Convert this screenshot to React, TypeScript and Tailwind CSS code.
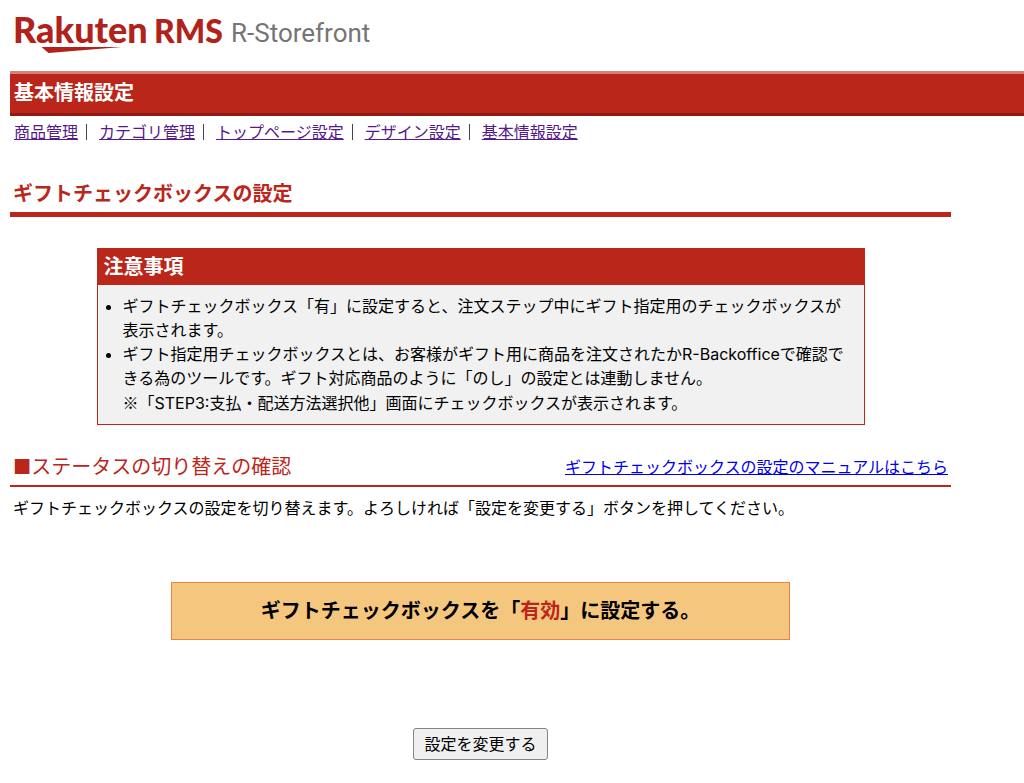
interface NavItem {
  label: string;
  href: string;
}

const NAV: NavItem[] = [
  { label: "商品管理", href: "#items" },
  { label: "カテゴリ管理", href: "#categories" },
  { label: "トップページ設定", href: "#top-page" },
  { label: "デザイン設定", href: "#design" },
  { label: "基本情報設定", href: "#basic" },
];

function Logo() {
  return (
    <svg className="block" width="380" height="60" viewBox="0 0 380 60" role="img" aria-label="Rakuten RMS R-Storefront">
      <g fill="#b1221a" fontFamily="Lato, 'Liberation Sans', sans-serif" fontWeight="900">
        <text x="3" y="43" fontSize="36">Rakuten</text>
        <text x="144" y="43" fontSize="32">RMS</text>
      </g>
      <path d="M31.5 47H112L38.5 53Z" fill="#b1221a" />
      <text x="221" y="42" fontSize="26" fill="#757575" fontFamily="Roboto, 'Liberation Sans', sans-serif">
        R-Storefront
      </text>
    </svg>
  );
}

function Nav() {
  return (
    <nav className="flex flex-wrap px-1 py-1">
      {NAV.map((item, i) => (
        <div key={item.href} className="flex items-center">
          <a href={item.href} className="text-[#551a8b] underline">
            {item.label}
          </a>
          {i < NAV.length - 1 && <span className="w-px h-4 bg-[#444] ml-2 mr-3" />}
        </div>
      ))}
    </nav>
  );
}

function Notice() {
  return (
    <section className="w-full max-w-[768px] mx-auto border border-[#bb261a] bg-[#f1f1f1]">
      <h3 className="bg-[#bb261a] text-white text-xl leading-9 font-bold px-[6px]">注意事項</h3>
      <ul className="list-disc pl-[25px] pr-2 py-[9px]">
        <li>
          ギフトチェックボックス「有」に設定すると、注文ステップ中にギフト指定用のチェックボックスが表示されます。
        </li>
        <li>
          ギフト指定用チェックボックスとは、お客様がギフト用に商品を注文されたかR-Backofficeで確認できる為のツールです。ギフト対応商品のように「のし」の設定とは連動しません。
          <br />
          <span className="font-['Noto_Sans_CJK_JP',sans-serif]">※</span>
          「STEP3:支払・配送方法選択他」画面にチェックボックスが表示されます。
        </li>
      </ul>
    </section>
  );
}

export default function App() {
  return (
    <div lang="ja" className="bg-white text-black text-base leading-6 pl-[10px] pb-6 font-[Inter,'Noto_Sans_CJK_JP',sans-serif]">
      <header>
        <Logo />
        <h1 className="mt-[11px] bg-[#bb261a] border-t-3 border-t-[#d4837b] border-b-3 border-b-[#8f1c13] text-white text-xl leading-[39px] font-bold px-1">
          基本情報設定
        </h1>
        <Nav />
      </header>

      <main className="w-full max-w-[941px]">
        <h2 className="mt-7 border-b-5 border-[#bb261a] text-[#bb261a] text-xl leading-9 font-bold px-[3px]">
          ギフトチェックボックスの設定
        </h2>

        <div className="pt-[31px] pb-6">
          <Notice />
        </div>

        <div className="flex flex-wrap items-center justify-between border-b-2 border-[#bb261a] px-[3px]">
          <h2 className="text-[#bb261a] text-xl leading-9">■ステータスの切り替えの確認</h2>
          <a href="#manual" className="text-[#0000ee] underline">
            ギフトチェックボックスの設定のマニュアルはこちら
          </a>
        </div>
        <p className="px-[3px] py-[9px]">
          ギフトチェックボックスの設定を切り替えます。よろしければ「設定を変更する」ボタンを押してください。
        </p>

        <p className="w-full max-w-[619px] mx-auto mt-[53px] border border-[#e8834a] bg-[#f5c77e] text-center text-xl font-bold py-[14px]">
          ギフトチェックボックスを「<span className="text-[#bb261a]">有効</span>」に設定する。
        </p>

        <div className="mt-[88px] text-center">
          <button
            type="button"
            className="border border-[#858585] rounded-[3px] bg-[#efefef] px-[10px] py-[3px]"
          >
            設定を変更する
          </button>
        </div>
      </main>
    </div>
  );
}
